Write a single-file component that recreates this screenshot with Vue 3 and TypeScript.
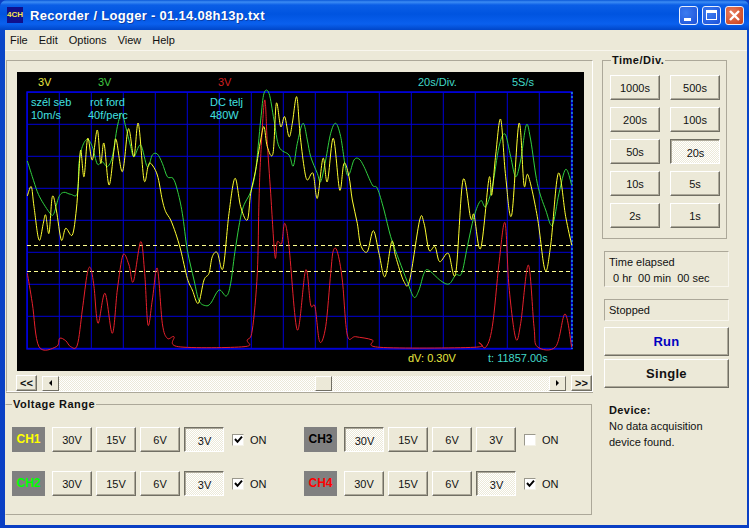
<script setup lang="ts">
type Pt = [number, number]

const timeDivs = ['1000s', '500s', '200s', '100s', '50s', '20s', '10s', '5s', '2s', '1s']
const ranges = ['30V', '15V', '6V', '3V']
const channels = [
  { name: 'CH1', color: '#ffff00', range: '3V', on: true },
  { name: 'CH3', color: '#000000', range: '30V', on: false },
  { name: 'CH2', color: '#00ff00', range: '3V', on: true },
  { name: 'CH4', color: '#ff0000', range: '3V', on: true }
]
const menus = ['File', 'Edit', 'Options', 'View', 'Help']

const gridX = Array.from({ length: 18 }, (_, i) => 28.3 + i * 32)
const gridY = Array.from({ length: 9 }, (_, i) => 92.3 + i * 32)

// traces were read off the screenshot in two halves of 3x zoom coords
const yellowA: Pt[] = [[85,408],[97,380],[105,440],[120,540],[133,490],[140,465],[150,520],[160,410],[172,450],[187,540],[200,505],[220,525],[232,450],[238,370],[245,270],[255,350],[266,235],[280,300],[295,210],[305,310],[315,250],[330,375],[345,270],[352,240],[370,335],[385,220],[392,215],[405,290],[418,190],[435,360],[447,320],[455,310],[475,345],[490,420],[500,455],[515,480],[530,520],[545,570],[565,655],[580,690],[598,730],[615,660],[630,640],[640,590],[655,578],[672,625],[690,460],[708,355],[725,440],[745,480],[755,400],[770,330],[785,240],[795,200],[805,260],[822,280],[832,130],[845,200],[857,170]]
const yellowB: Pt[] = [[0,230],[10,190],[23,110],[33,220],[45,320],[55,360],[72,340],[85,415],[102,295],[115,365],[133,235],[152,390],[165,310],[180,350],[190,420],[205,490],[215,555],[235,575],[253,512],[270,580],[288,650],[308,545],[320,590],[345,665],[362,660],[392,480],[405,490],[420,570],[438,560],[452,605],[478,580],[500,640],[522,360],[545,475],[555,465],[575,565],[600,355],[608,405],[620,285],[635,178],[650,350],[668,465],[690,190],[705,375],[717,345],[745,470],[768,630],[785,555],[808,340],[830,470],[848,555]]
const greenA: Pt[] = [[85,303],[100,350],[115,395],[130,425],[155,462],[165,460],[180,410],[195,397],[215,403],[235,400],[240,310],[250,260],[265,238],[280,260],[295,312],[310,305],[325,320],[340,290],[355,200],[368,160],[380,200],[395,260],[405,290],[425,255],[445,320],[460,285],[475,282],[490,310],[505,350],[522,355],[535,390],[550,460],[565,570],[585,660],[600,722],[620,737],[635,730],[660,690],[682,708],[695,670],[710,560],[730,450],[755,395],[770,330],[785,180],[795,100],[810,100],[825,180],[840,260]]
const greenB: Pt[] = [[0,285],[13,318],[25,250],[42,190],[55,240],[65,290],[85,340],[95,365],[110,300],[125,220],[140,190],[155,230],[175,345],[195,300],[210,297],[225,320],[250,375],[265,385],[285,450],[305,530],[330,600],[355,665],[375,712],[390,690],[405,640],[418,630],[455,662],[480,672],[500,645],[518,640],[535,560],[555,470],[575,422],[590,440],[610,380],[630,260],[648,222],[665,290],[680,350],[695,300],[712,195],[725,240],[745,370],[770,450],[790,495],[810,400],[830,328],[848,375]]
const redA: Pt[] = [[85,640],[100,730],[120,860],[172,860],[182,835],[200,842],[215,860],[235,855],[250,750],[265,640],[275,625],[285,680],[297,790],[318,700],[340,820],[355,690],[372,585],[390,615],[403,665],[425,545],[437,640],[447,795],[460,720],[475,625],[490,790],[505,835],[525,830],[538,860],[735,860],[745,840],[760,810],[775,640],[780,420],[785,290],[797,120],[805,250],[815,400],[828,590],[835,545],[848,550],[857,490]]
const redB: Pt[] = [[0,560],[25,810],[50,630],[65,735],[78,740],[92,845],[110,800],[125,640],[133,572],[145,575],[160,660],[175,825],[200,830],[250,840],[272,862],[555,862],[570,848],[590,862],[610,800],[630,610],[648,488],[660,680],[680,835],[695,790],[718,615],[735,800],[745,860],[800,860],[828,762],[848,862]]

const toPage = (a: Pt[], ox: number): Pt[] => a.map(([x, y]) => [ox + x / 3, 60 + y / 3])

// catmull-rom so the traces look smoothed like the original
const tracePath = (a: Pt[], b: Pt[]) => {
  const p = [...toPage(a, 0), ...toPage(b, 290)]
  let d = `M${p[0][0].toFixed(1)} ${p[0][1].toFixed(1)}`
  for (let i = 0; i < p.length - 1; i++) {
    const p0 = p[Math.max(i - 1, 0)]
    const p1 = p[i]
    const p2 = p[i + 1]
    const p3 = p[Math.min(i + 2, p.length - 1)]
    const c1x = p1[0] + (p2[0] - p0[0]) / 6
    const c1y = p1[1] + (p2[1] - p0[1]) / 6
    const c2x = p2[0] - (p3[0] - p1[0]) / 6
    const c2y = p2[1] - (p3[1] - p1[1]) / 6
    d += `C${c1x.toFixed(1)} ${c1y.toFixed(1)} ${c2x.toFixed(1)} ${c2y.toFixed(1)} ${p2[0].toFixed(1)} ${p2[1].toFixed(1)}`
  }
  return d
}

const greenPath = tracePath(greenA, greenB)
const redPath = tracePath(redA, redB)
const yellowPath = tracePath(yellowA, yellowB)
</script>

<template>
  <div class="window">
    <div class="titlebar">
      <span class="app-icon">4CH</span>
      <span class="title">Recorder / Logger - 01.14.08h13p.txt</span>
      <div class="win-btns">
        <span class="win-btn"><i class="min-glyph"></i></span>
        <span class="win-btn"><i class="max-glyph"></i></span>
        <span class="win-btn close">
          <svg width="13" height="13" viewBox="0 0 13 13"><path d="M2 2L11 11M11 2L2 11" stroke="#fff" stroke-width="2.4" /></svg>
        </span>
      </div>
    </div>

    <div class="client">
      <div class="menubar">
        <span v-for="m in menus" :key="m" class="menu-item">{{ m }}</span>
      </div>

      <div class="body">
        <div class="left">
          <div class="scope-panel">
            <svg class="scope" width="567" height="299" viewBox="18 72 567 299">
              <rect x="18" y="72" width="567" height="299" fill="#000" />
              <line v-for="x in gridX" :key="x" :x1="x" :x2="x" y1="92" y2="349" stroke="#0000d8" stroke-width="1" />
              <line v-for="y in gridY" :key="y" x1="28" x2="573" :y1="y" :y2="y" stroke="#0000d8" stroke-width="1" />
              <rect x="28" y="92" width="545" height="257" fill="none" stroke="#0000e8" stroke-width="1.4" />
              <line x1="573" x2="573" y1="92" y2="349" stroke="#30d8f0" stroke-width="1" stroke-dasharray="2 2" />
              <line x1="28" x2="573" y1="245.5" y2="245.5" stroke="#ffff90" stroke-width="1" stroke-dasharray="4 3" />
              <line x1="28" x2="573" y1="271.5" y2="271.5" stroke="#ffff90" stroke-width="1" stroke-dasharray="4 3" />
              <path :d="redPath" fill="none" stroke="#e8202c" stroke-width="1" />
              <path :d="greenPath" fill="none" stroke="#30d040" stroke-width="1" />
              <path :d="yellowPath" fill="none" stroke="#ffff30" stroke-width="1" />
              <g class="scope-text">
                <text x="39" y="86" fill="#e8e840">3V</text>
                <text x="99" y="86" fill="#40c840">3V</text>
                <text x="219" y="86" fill="#d02020">3V</text>
                <text x="419" y="86" fill="#40d8c8">20s/Div.</text>
                <text x="513" y="86" fill="#40d8c8">5S/s</text>
                <text x="32" y="106" fill="#40e0e0">szél seb</text>
                <text x="32" y="119" fill="#40e0e0">10m/s</text>
                <text x="91" y="106" fill="#40e0e0">rot ford</text>
                <text x="89" y="119" fill="#40e0e0">40f/perc</text>
                <text x="211" y="106" fill="#40e0e0">DC telj</text>
                <text x="211" y="119" fill="#40e0e0">480W</text>
                <text x="409" y="362" fill="#e8e840">dV: 0.30V</text>
                <text x="489" y="362" fill="#40d8c8">t: 11857.00s</text>
              </g>
            </svg>
            <div class="scrollrow">
              <button class="btn jump">&lt;&lt;</button>
              <div class="scrollbar">
                <span class="sb-btn"><i class="arrow-left"></i></span>
                <div class="sb-track before"></div>
                <span class="sb-thumb"></span>
                <div class="sb-track"></div>
                <span class="sb-btn"><i class="arrow-right"></i></span>
              </div>
              <button class="btn jump">&gt;&gt;</button>
            </div>
          </div>

          <div class="group voltage">
            <span class="legend">Voltage Range</span>
            <div class="channels">
              <div v-for="c in channels" :key="c.name" class="channel">
                <span class="ch-label" :style="{ color: c.color }">{{ c.name }}</span>
                <div class="ch-btns">
                  <button v-for="r in ranges" :key="r" class="btn" :class="{ pressed: r === c.range }">{{ r }}</button>
                </div>
                <span class="check">
                  <svg v-if="c.on" width="9" height="9" viewBox="0 0 9 9"><path d="M1 4L3.5 6.8L8 1.6" fill="none" stroke="#000" stroke-width="2" /></svg>
                </span>
                <span class="on">ON</span>
              </div>
            </div>
          </div>
        </div>

        <div class="right">
          <div class="group timediv">
            <span class="legend">Time/Div.</span>
            <div class="time-grid">
              <button v-for="t in timeDivs" :key="t" class="btn" :class="{ pressed: t === '20s' }">{{ t }}</button>
            </div>
          </div>
          <div class="status elapsed">
            <div>Time elapsed</div>
            <div class="elapsed-val">0 hr&nbsp; 00 min&nbsp; 00 sec</div>
          </div>
          <div class="status stopped">Stopped</div>
          <button class="btn big run">Run</button>
          <button class="btn big single">Single</button>
          <div class="device">
            <div class="device-head">Device:</div>
            <div>No data acquisition</div>
            <div>device found.</div>
          </div>
        </div>
      </div>
    </div>
  </div>
</template>

<style>
html, body { margin: 0; background: #0a3fc4; overflow: hidden; }
</style>

<style scoped>
.window {
  width: 749px;
  height: 528px;
  box-sizing: border-box;
  display: flex;
  flex-direction: column;
  padding: 0 2px 3px 5px;
  border-radius: 7px 7px 0 0;
  background: linear-gradient(#0a50d8, #0a46c8 40px, #0a3fc4);
  font-family: "Liberation Sans", Arial, sans-serif;
  font-size: 11px;
  color: #111;
  overflow: hidden;
}

.titlebar {
  height: 30px;
  margin: 0 -2px 0 -5px;
  padding: 0 5px 0 7px;
  flex: none;
  display: flex;
  align-items: center;
  background: linear-gradient(#0a58d8 0, #3c8cf4 2px, #0a5ee6 5px, #0054e0 14px, #0a60ee 24px, #0046c8 30px);
}
.app-icon {
  width: 16px;
  height: 16px;
  background: #10108c;
  color: #f4e850;
  font-size: 8px;
  font-weight: 700;
  line-height: 16px;
  text-align: center;
}
.title {
  margin-left: 7px;
  color: #fff;
  font-size: 13px;
  font-weight: 700;
  letter-spacing: 0.3px;
  text-shadow: 1px 1px 0 #0a3ea8;
}
.win-btns {
  margin-left: auto;
  display: flex;
  gap: 4px;
}
.win-btn {
  width: 19px;
  height: 19px;
  box-sizing: border-box;
  border: 1px solid #e8eefc;
  border-radius: 3px;
  background: radial-gradient(circle at 35% 35%, #3c7cf0, #1c50d8);
  display: flex;
  align-items: center;
  justify-content: center;
  position: relative;
}
.win-btn.close {
  background: radial-gradient(circle at 35% 35%, #e88060, #c83c18);
}
.min-glyph {
  width: 7px;
  height: 3px;
  background: #fff;
  position: absolute;
  left: 4px;
  bottom: 3px;
}
.max-glyph {
  width: 11px;
  height: 10px;
  box-sizing: border-box;
  border: 1px solid #fff;
  border-top-width: 3px;
}

.client {
  flex: 1;
  min-height: 0;
  background: #ece9d8;
  display: flex;
  flex-direction: column;
}
.menubar {
  height: 20px;
  flex: none;
  padding-left: 5px;
  display: flex;
  align-items: center;
  gap: 11px;
  border-bottom: 1px solid #f8f6ee;
  font-size: 11px;
}
.body {
  flex: 1;
  display: flex;
  padding: 9px 0 0 1px;
  min-height: 0;
}
.left {
  width: 587px;
  flex: none;
}
.scope-panel {
  height: 332px;
  box-sizing: border-box;
  border: 1px solid #aca899;
  border-bottom-color: #fff;
  border-right-color: #fff;
  padding: 11px 0 0 10px;
  box-shadow: 0 1px 0 #aca899;
}
.scope {
  display: block;
}
.scope-text text {
  font-family: "Liberation Sans", Arial, sans-serif;
  font-size: 11px;
}
.scrollrow {
  display: flex;
  align-items: center;
  height: 16px;
  margin: 4px 0 0 -1px;
}
.jump {
  width: 21px;
  height: 16px;
  flex: none;
  font-size: 11px;
  font-weight: 700;
  line-height: 10px;
}
.scrollbar {
  flex: 1;
  display: flex;
  align-items: center;
  height: 15px;
  margin: 0 5px;
  background: repeating-conic-gradient(#fff 0 25%, #ece9d8 0 50%) 0 0 / 2px 2px;
}
.sb-btn, .sb-thumb {
  width: 17px;
  height: 15px;
  box-sizing: border-box;
  flex: none;
  background: #ece9d8;
  border: 1px solid;
  border-color: #fff #716f64 #716f64 #fff;
  display: flex;
  align-items: center;
  justify-content: center;
}
.sb-track { flex: 1; }
.sb-track.before { flex: none; width: 256px; }
.arrow-left, .arrow-right {
  width: 0;
  height: 0;
  border-top: 3px solid transparent;
  border-bottom: 3px solid transparent;
}
.arrow-left { border-right: 3px solid #000; }
.arrow-right { border-left: 3px solid #000; }

.group {
  position: relative;
  box-sizing: border-box;
  border: 1px solid #aca899;
}
.legend {
  position: absolute;
  top: -7px;
  background: #ece9d8;
  padding: 0 1px;
  font-size: 11px;
  font-weight: 700;
  letter-spacing: 0.5px;
  line-height: 13px;
}
.voltage {
  margin-top: 12px;
  height: 111px;
  width: 587px;
  margin-left: -1px;
  border-left-color: transparent;
}
.voltage .legend { left: 6px; }
.channels {
  display: grid;
  grid-template-columns: 292px 1fr;
  row-gap: 19px;
  padding: 22px 0 0 6px;
}
.channel {
  display: flex;
  align-items: center;
  height: 25px;
}
.ch-label {
  width: 33px;
  height: 25px;
  background: #808080;
  font-size: 12px;
  font-weight: 700;
  line-height: 25px;
  text-align: center;
}
.ch-btns {
  margin-left: 7px;
  display: flex;
  gap: 4px;
}
.ch-btns .btn {
  width: 40px;
  height: 25px;
}
.check {
  width: 12px;
  height: 12px;
  margin-left: 8px;
  box-sizing: border-box;
  background: #fff;
  border: 1px solid;
  border-color: #9a988c #f4f2e8 #f4f2e8 #9a988c;
  display: flex;
  align-items: center;
  justify-content: center;
}
.on {
  margin-left: 6px;
}

.btn {
  padding: 0;
  box-sizing: border-box;
  border: 1px solid;
  border-color: #fff #716f64 #716f64 #fff;
  box-shadow: inset -1px -1px 0 #aca899;
  background: #ece9d8;
  font-family: "Liberation Sans", Arial, sans-serif;
  font-size: 11px;
  color: #111;
}
.btn.pressed {
  border-color: #716f64 #fff #fff #716f64;
  box-shadow: inset 1px 1px 0 #aca899;
  background: repeating-conic-gradient(#fff 0 25%, #ece9d8 0 50%) 0 0 / 2px 2px;
  padding: 2px 0 0 1px;
}

.right {
  margin-left: 9px;
  width: 127px;
  flex: none;
  display: flex;
  flex-direction: column;
  align-items: flex-start;
}
.timediv {
  width: 125px;
  height: 179px;
}
.timediv .legend { left: 8px; }
.time-grid {
  display: grid;
  grid-template-columns: 50px 50px;
  grid-auto-rows: 25px;
  column-gap: 10px;
  row-gap: 7px;
  padding: 14px 0 0 7px;
}
.status {
  margin-left: 2px;
  width: 125px;
  box-sizing: border-box;
  border: 1px solid;
  border-color: #aca899 #f8f6ee #f8f6ee #aca899;
  padding-left: 4px;
}
.elapsed {
  margin-top: 12px;
  height: 36px;
  line-height: 16px;
  padding-top: 2px;
}
.elapsed-val { padding-left: 4px; }
.stopped {
  margin-top: 12px;
  height: 22px;
  line-height: 20px;
}
.big {
  margin-left: 2px;
  width: 125px;
  font-size: 13px;
  font-weight: 700;
  letter-spacing: 0.3px;
}
.run {
  margin-top: 6px;
  height: 29px;
  color: #0000c0;
}
.single {
  margin-top: 3px;
  height: 29px;
}
.device {
  margin: 14px 0 0 7px;
  line-height: 16px;
}
.device-head {
  font-weight: 700;
  letter-spacing: 0.4px;
}
</style>
